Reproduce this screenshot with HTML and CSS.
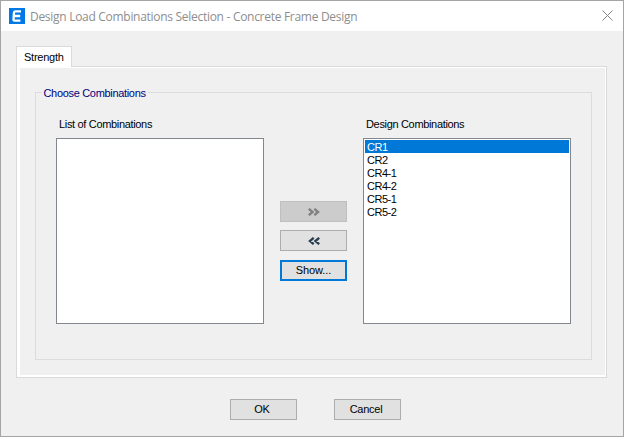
FILE: index.html
```html
<!DOCTYPE html>
<html lang="en">
<head>
<meta charset="utf-8">
<title>Design Load Combinations Selection - Concrete Frame Design</title>
<link rel="stylesheet" href="styles.css">
</head>
<body>
<div class="window">
  <header class="titlebar">
    <svg class="logo" width="16" height="16" viewBox="0 0 16 16"><rect width="16" height="16" fill="#0078e7"/><path d="M12 3.3H6.4Q5.2 3.3 5 4.5L4.5 11.3Q4.4 12.7 5.6 12.7H11.4M5 8H11.2" fill="none" stroke="#fff" stroke-width="2.3"/></svg>
    <h1 class="title">Design Load Combinations Selection - Concrete Frame Design</h1>
    <svg class="close" width="11" height="11" viewBox="0 0 11 11"><path d="M.5.5l10 10M10.5.5l-10 10" stroke="#868686" stroke-width="1" fill="none"/></svg>
  </header>
  <main class="content">
    <div class="tab">Strength</div>
    <section class="pane">
      <div class="group">
        <h2 class="legend">Choose Combinations</h2>
        <div class="columns">
          <div class="column">
            <div class="label">List of Combinations</div>
            <ul class="listbox"></ul>
          </div>
          <div class="actions">
            <button class="btn disabled" disabled><svg width="12" height="8" viewBox="0 0 12 8"><path d="M.8.8L4.6 4 .8 7.2M6.3.8L10.1 4 6.3 7.2" fill="none" stroke="#808080" stroke-width="2.3"/></svg></button>
            <button class="btn"><svg width="12" height="8" viewBox="0 0 12 8"><path d="M5.7.8L1.9 4l3.8 3.2M11.2.8L7.4 4l3.8 3.2" fill="none" stroke="#2b3e50" stroke-width="2.3"/></svg></button>
            <button class="btn focused">Show...</button>
          </div>
          <div class="column">
            <div class="label">Design Combinations</div>
            <ul class="listbox">
              <li class="selected">CR1</li>
              <li>CR2</li>
              <li>CR4-1</li>
              <li>CR4-2</li>
              <li>CR5-1</li>
              <li>CR5-2</li>
            </ul>
          </div>
        </div>
      </div>
    </section>
    <footer class="footer">
      <button class="btn ok">OK</button>
      <button class="btn cancel">Cancel</button>
    </footer>
  </main>
</div>
</body>
</html>
```
FILE: styles.css
```css
* { box-sizing: border-box; }
body { margin: 0; font: 11px/13px "Liberation Sans", Arial, sans-serif; color: #000; letter-spacing: -0.25px; }
.window { width: 624px; height: 437px; border: 1px solid #a5a5a5; background: #f0f0f0; }
.titlebar { height: 30px; background: #fff; display: flex; align-items: center; padding: 0 10px 0 8px; }
.title { margin: 0 auto 0 5px; padding-top: 1px; font: 12px/16px "Open Sans", sans-serif; color: #8e8e8e; letter-spacing: -0.29px; white-space: nowrap; }
.close { margin-top: -1px; }
.content { padding: 15px 16px 0 15px; }
.tab { position: relative; width: 56px; height: 21px; margin-bottom: -1px; border: 1px solid #dadada; border-bottom: 0; background: #fff; padding: 4px 0 0 7px; white-space: nowrap; }
.pane { width: 591px; height: 312px; border: 1px solid #dadada; background: #f0f0f0; box-shadow: inset 3px 0 #fff, inset -1px 0 #fff, inset 0 1px #fff, inset 0 -2px #fff; padding: 25px 14px 17px 18px; }
.group { width: 557px; height: 268px; border: 1px solid #dcdcdc; }
.legend { margin: -7px 0 0 6px; width: 106px; height: 14px; padding: 1px 1px 0 1.5px; background: #f0f0f0; color: #000080; font: inherit; letter-spacing: -0.32px; white-space: nowrap; }
.columns { display: flex; margin: 18px 0 0 20px; }
.column { width: 208px; }
.label { height: 20px; padding-left: 3px; letter-spacing: -0.33px; white-space: nowrap; }
.listbox { list-style: none; height: 186px; margin: 0; border: 1px solid #828790; background: #fff; padding: 1px; letter-spacing: -0.5px; }
.listbox li { height: 13px; line-height: 15px; padding-left: 2px; }
.listbox .selected { background: #0078d7; color: #fff; }
.actions { width: 67px; margin: 83px 16px 0; }
.btn { display: flex; align-items: center; justify-content: center; width: 67px; height: 21px; margin: 0 0 8px; padding: 0; border: 1px solid #adadad; background: #e1e1e1; color: #000; font: inherit; letter-spacing: inherit; }
.disabled { background: #ccc; border-color: #bfbfbf; }
.focused { border: 2px solid #0078d7; margin-top: 9px; letter-spacing: -0.1px; }
.ok { padding-right: 3px; }
.cancel { padding-right: 3px; }
.footer { display: flex; gap: 37px; margin: 21px 0 0 214px; }
```
